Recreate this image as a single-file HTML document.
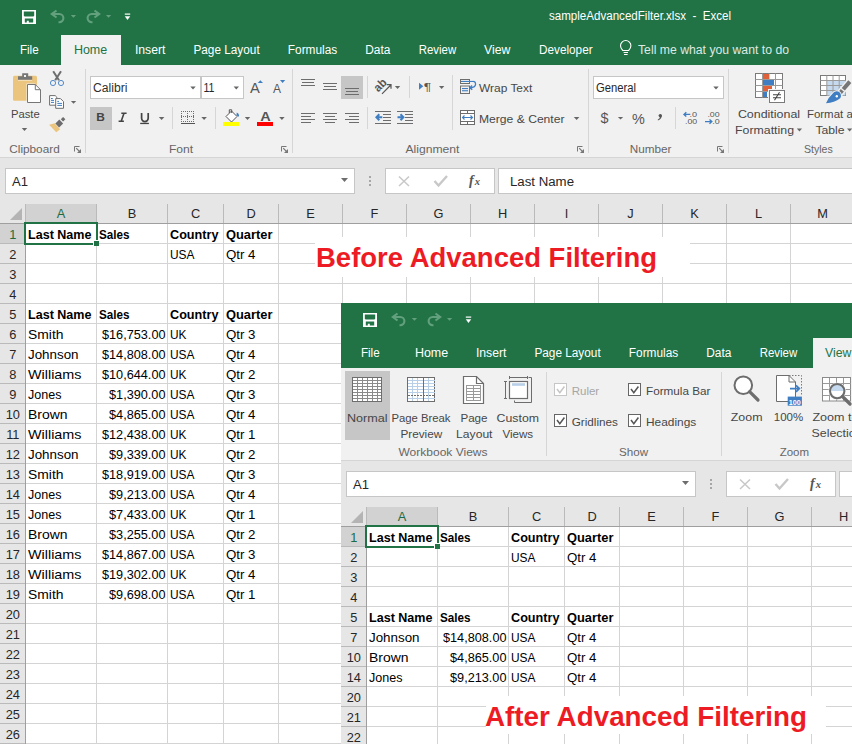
<!DOCTYPE html><html><head><meta charset="utf-8"><style>html,body{margin:0;padding:0;background:#fff;overflow:hidden}svg{display:block}text{font-family:"Liberation Sans",sans-serif;white-space:pre}</style></head><body>
<svg width="852" height="744" viewBox="0 0 852 744">
<g>
<rect x="0" y="0" width="900" height="65" fill="#217346" />
<rect x="61" y="35" width="60" height="30" fill="#f1f1f1" />
<text x="19.900000000000002" y="54" font-size="12.5" fill="#ffffff" textLength="18.8" lengthAdjust="spacingAndGlyphs" >File</text>
<text x="73.89999999999999" y="54" font-size="12.5" fill="#217346" textLength="33.3" lengthAdjust="spacingAndGlyphs" >Home</text>
<text x="134.9" y="54" font-size="12.5" fill="#ffffff" textLength="30.6" lengthAdjust="spacingAndGlyphs" >Insert</text>
<text x="193.4" y="54" font-size="12.5" fill="#ffffff" textLength="66.3" lengthAdjust="spacingAndGlyphs" >Page Layout</text>
<text x="287.8" y="54" font-size="12.5" fill="#ffffff" textLength="49.4" lengthAdjust="spacingAndGlyphs" >Formulas</text>
<text x="365.2" y="54" font-size="12.5" fill="#ffffff" textLength="25.2" lengthAdjust="spacingAndGlyphs" >Data</text>
<text x="418.7" y="54" font-size="12.5" fill="#ffffff" textLength="37.5" lengthAdjust="spacingAndGlyphs" >Review</text>
<text x="484.0" y="54" font-size="12.5" fill="#ffffff" textLength="26.4" lengthAdjust="spacingAndGlyphs" >View</text>
<text x="539.0999999999999" y="54" font-size="12.5" fill="#ffffff" textLength="53.5" lengthAdjust="spacingAndGlyphs" >Developer</text>
<rect x="0" y="65" width="900" height="92" fill="#f1f1f1" />
<rect x="0" y="157" width="900" height="1" fill="#d5d5d5" />
<rect x="0" y="158" width="900" height="46" fill="#e6e6e6" />
<text x="549" y="20" font-size="12.5" fill="#ffffff" textLength="182" lengthAdjust="spacingAndGlyphs" >sampleAdvancedFilter.xlsx  -  Excel</text>
<path fill="#fff" fill-rule="evenodd" d="M22 10h14v14H22z M23.8 11.6v4.2l0.8 0.8h8.8l0.8-0.8V11.6z M24.8 18.6v3.8h2v-1.6h2v1.6h4.4v-3.8z"/>
<path d="M56.5 10.5L51.8 14L56.5 17.5M52.5 14H59.3a4.1 4.1 0 0 1 0 8.2H58.5" stroke="#63a07d" stroke-width="2.1" fill="none"/>
<path d="M70.8 15h5.3l-2.65 2.8z" fill="#63a07d"/>
<path d="M94.5 10.5L99.2 14L94.5 17.5M98.5 14H91.7a4.1 4.1 0 0 0 0 8.2H92.5" stroke="#63a07d" stroke-width="2.1" fill="none"/>
<path d="M105.9 15h5.3l-2.65 2.8z" fill="#63a07d"/>
<rect x="124.8" y="13.5" width="5.4" height="1.2" fill="#fff" />
<path d="M124.8 16.2h5.4l-2.7 3.8z" fill="#fff"/>
<text x="621" y="55" font-size="1" fill="#000" ></text>
<path d="M623.6 52.5h4.4M624 54.5h3.6M622.8 50.5q-2.3-2.3-2.3-4.8a5.2 5.2 0 0 1 10.4 0q0 2.5-2.3 4.8z" stroke="#ffffff" stroke-width="1.1" fill="none"/>
<text x="638" y="54" font-size="12.5" fill="#dfe9e3" textLength="151" lengthAdjust="spacingAndGlyphs" >Tell me what you want to do</text>
<rect x="13" y="75.8" width="24" height="25" rx="1.5" fill="#ebc57e"/>
<rect x="18" y="79.5" width="14" height="1.5" fill="#f3deb5"/>
<path d="M18 76.2h4.2v-3h6v3h4v3.6H18z" fill="#767676"/>
<rect x="24" y="75" width="2" height="2" fill="#f1f1f1" />
<path d="M26.5 83.5h8.5l5.5 5.5v14H26.5z" fill="#f1f1f1"/>
<path d="M27.5 84.5h7.8l5.2 5.2v12.8h-13z" fill="#ffffff" stroke="#767676" stroke-width="1"/>
<path d="M35.3 84.5v5.2h5.2" fill="none" stroke="#767676" stroke-width="1"/>
<text x="10.9" y="118" font-size="11.6" fill="#474747" textLength="28.8" lengthAdjust="spacingAndGlyphs" >Paste</text>
<path d="M21.8 128h5.4l-2.7 3z" fill="#666666"/>
<path d="M53.2 71.3L59 80.2M61 71.3L55.2 80.2" stroke="#6d6d6d" stroke-width="2" fill="none"/>
<circle cx="53" cy="83" r="2.6" fill="none" stroke="#4a84c8" stroke-width="0.95"/>
<circle cx="61" cy="83" r="2.6" fill="none" stroke="#4a84c8" stroke-width="0.95"/>
<path d="M49.6 95.6h5.6l1.6 1.6v8H49.6z" fill="#fff" stroke="#6d6d6d" stroke-width="1"/>
<path d="M55.7 98.6h4.8l3 3v6.7h-7.8z" fill="#fff" stroke="#6d6d6d" stroke-width="1"/>
<rect x="51" y="98.0" width="1.7999999999999972" height="1" fill="#3f7ec3" />
<rect x="51" y="99.9" width="3" height="1" fill="#3f7ec3" />
<rect x="51" y="101.9" width="3" height="1" fill="#3f7ec3" />
<rect x="57.3" y="100.9" width="1.7000000000000028" height="1" fill="#3f7ec3" />
<rect x="57.3" y="102.9" width="4.700000000000003" height="1" fill="#3f7ec3" />
<rect x="57.3" y="104.9" width="4.700000000000003" height="1" fill="#3f7ec3" />
<path d="M70.9 101h5.3l-2.65 2.8z" fill="#666666"/>
<path d="M49.1 124.8L54.5 123.2L60.2 129.3L56.2 132.2z" fill="#ebc57e"/>
<path d="M55.3 123.6L59.3 119.6L63.1 123.4L59.1 127.4z" fill="#6d6d6d"/>
<path d="M60.8 119.2L63.1 116.9L65.4 119.2L63.1 121.5z" fill="#6d6d6d"/>
<text x="9.3" y="152.9" font-size="11" fill="#666666" textLength="50.4" lengthAdjust="spacingAndGlyphs" >Clipboard</text>
<path d="M74.5 151.5V146.5H79.5" fill="none" stroke="#777" stroke-width="1"/>
<path d="M76.2 148.2L79.5 151.5" fill="none" stroke="#777" stroke-width="1.1"/>
<path d="M81 149V153H77z" fill="#777"/>
<rect x="85" y="69" width="1" height="84" fill="#d6d6d6" />
<rect x="90.5" y="76.5" width="110" height="22" fill="#fff" stroke="#c6c6c6"/>
<text x="93" y="91.5" font-size="12.5" fill="#303030" textLength="34.5" lengthAdjust="spacingAndGlyphs" >Calibri</text>
<path d="M190.3 86.5h5.4l-2.7 3z" fill="#666666"/>
<rect x="201.5" y="76.5" width="42" height="22" fill="#fff" stroke="#c6c6c6"/>
<text x="203.5" y="91.5" font-size="12.5" fill="#262626" textLength="11" lengthAdjust="spacingAndGlyphs" >11</text>
<path d="M233.6 86.5h5.4l-2.7 3z" fill="#666666"/>
<text x="250" y="93.4" font-size="14.7" fill="#555" textLength="9.8" lengthAdjust="spacingAndGlyphs" >A</text>
<path d="M257.7 83h5.3l-2.65-2.8z" fill="#3f7ec3" transform="translate(0,0)"/>
<text x="272.9" y="93.4" font-size="12.3" fill="#555" textLength="8" lengthAdjust="spacingAndGlyphs" >A</text>
<path d="M280 80h5.2l-2.6 2.9z" fill="#3f7ec3"/>
<rect x="90" y="107" width="22" height="23" fill="#c6c6c6" />
<text x="96.2" y="121.4" font-size="11.5" fill="#444" font-weight="bold" textLength="8.6" lengthAdjust="spacingAndGlyphs" >B</text>
<path d="M121.3 113.2h5.3M118.6 121.2h5.3M124 113.2l-2.8 8" stroke="#444" stroke-width="1.6" fill="none"/>
<path d="M141.6 113v5.3a3.3 3.3 0 0 0 6.6 0V113" stroke="#444" stroke-width="1.7" fill="none"/>
<rect x="140.2" y="122.8" width="8.7" height="1.3" fill="#444" />
<path d="M158.8 117h5.6l-2.8 3z" fill="#666666"/>
<rect x="172" y="107" width="1" height="22" fill="#d6d6d6" />
<rect x="181" y="111" width="1" height="1" fill="#6d6d6d" />
<rect x="183" y="111" width="1" height="1" fill="#6d6d6d" />
<rect x="185" y="111" width="1" height="1" fill="#6d6d6d" />
<rect x="187" y="111" width="1" height="1" fill="#6d6d6d" />
<rect x="189" y="111" width="1" height="1" fill="#6d6d6d" />
<rect x="191" y="111" width="1" height="1" fill="#6d6d6d" />
<rect x="193" y="111" width="1" height="1" fill="#6d6d6d" />
<rect x="181" y="116" width="1" height="1" fill="#6d6d6d" />
<rect x="183" y="116" width="1" height="1" fill="#6d6d6d" />
<rect x="185" y="116" width="1" height="1" fill="#6d6d6d" />
<rect x="187" y="116" width="1" height="1" fill="#6d6d6d" />
<rect x="189" y="116" width="1" height="1" fill="#6d6d6d" />
<rect x="191" y="116" width="1" height="1" fill="#6d6d6d" />
<rect x="193" y="116" width="1" height="1" fill="#6d6d6d" />
<rect x="181" y="121" width="1" height="1" fill="#6d6d6d" />
<rect x="183" y="121" width="1" height="1" fill="#6d6d6d" />
<rect x="185" y="121" width="1" height="1" fill="#6d6d6d" />
<rect x="187" y="121" width="1" height="1" fill="#6d6d6d" />
<rect x="189" y="121" width="1" height="1" fill="#6d6d6d" />
<rect x="191" y="121" width="1" height="1" fill="#6d6d6d" />
<rect x="193" y="121" width="1" height="1" fill="#6d6d6d" />
<rect x="181" y="111" width="1" height="1" fill="#6d6d6d" />
<rect x="181" y="113" width="1" height="1" fill="#6d6d6d" />
<rect x="181" y="115" width="1" height="1" fill="#6d6d6d" />
<rect x="181" y="117" width="1" height="1" fill="#6d6d6d" />
<rect x="181" y="119" width="1" height="1" fill="#6d6d6d" />
<rect x="181" y="121" width="1" height="1" fill="#6d6d6d" />
<rect x="187" y="111" width="1" height="1" fill="#6d6d6d" />
<rect x="187" y="113" width="1" height="1" fill="#6d6d6d" />
<rect x="187" y="115" width="1" height="1" fill="#6d6d6d" />
<rect x="187" y="117" width="1" height="1" fill="#6d6d6d" />
<rect x="187" y="119" width="1" height="1" fill="#6d6d6d" />
<rect x="187" y="121" width="1" height="1" fill="#6d6d6d" />
<rect x="193" y="111" width="1" height="1" fill="#6d6d6d" />
<rect x="193" y="113" width="1" height="1" fill="#6d6d6d" />
<rect x="193" y="115" width="1" height="1" fill="#6d6d6d" />
<rect x="193" y="117" width="1" height="1" fill="#6d6d6d" />
<rect x="193" y="119" width="1" height="1" fill="#6d6d6d" />
<rect x="193" y="121" width="1" height="1" fill="#6d6d6d" />
<rect x="181" y="123" width="14" height="1" fill="#555" />
<path d="M201.3 117h5.6l-2.8 3z" fill="#666666"/>
<rect x="215" y="107" width="1" height="22" fill="#d6d6d6" />
<path d="M226 116.5L231.5 111L237 116.5L231.5 122z" fill="#fff" stroke="#555" stroke-width="1"/>
<path d="M229.3 113V109.8h2.4V113" fill="none" stroke="#555" stroke-width="1"/>
<path d="M236.8 112.5q2.5 1 2.2 4.2q-1.2-1-2.6-1.3z" fill="#3f7ec3"/>
<rect x="223" y="122" width="16" height="4" fill="#ffff00" />
<path d="M244.8 117h5.4l-2.7 3z" fill="#666666"/>
<text x="260.2" y="121.4" font-size="13.5" fill="#555" font-weight="bold" textLength="10.5" lengthAdjust="spacingAndGlyphs" >A</text>
<rect x="257" y="122" width="16" height="4" fill="#ff0000" />
<path d="M279.2 117h5.4l-2.7 3z" fill="#666666"/>
<text x="168.9" y="152.9" font-size="11" fill="#666666" textLength="24.2" lengthAdjust="spacingAndGlyphs" >Font</text>
<path d="M281.5 151.5V146.5H286.5" fill="none" stroke="#777" stroke-width="1"/>
<path d="M283.2 148.2L286.5 151.5" fill="none" stroke="#777" stroke-width="1.1"/>
<path d="M288 149V153H284z" fill="#777"/>
<rect x="292" y="69" width="1" height="84" fill="#d6d6d6" />
<rect x="341" y="76" width="22" height="23" fill="#c6c6c6" />
<rect x="301" y="79" width="14" height="1" fill="#6d6d6d" />
<rect x="302" y="82" width="12" height="1" fill="#6d6d6d" />
<rect x="301" y="85" width="14" height="1" fill="#6d6d6d" />
<rect x="323" y="83" width="14" height="1" fill="#6d6d6d" />
<rect x="324" y="86" width="12" height="1" fill="#6d6d6d" />
<rect x="323" y="89" width="14" height="1" fill="#6d6d6d" />
<rect x="345" y="88" width="14" height="1" fill="#6d6d6d" />
<rect x="346" y="91" width="12" height="1" fill="#6d6d6d" />
<rect x="345" y="94" width="14" height="1" fill="#6d6d6d" />
<rect x="301" y="113" width="14" height="1" fill="#6d6d6d" />
<rect x="301" y="116" width="10" height="1" fill="#6d6d6d" />
<rect x="301" y="119" width="14" height="1" fill="#6d6d6d" />
<rect x="301" y="122" width="10" height="1" fill="#6d6d6d" />
<rect x="323" y="113" width="14" height="1" fill="#6d6d6d" />
<rect x="325" y="116" width="10" height="1" fill="#6d6d6d" />
<rect x="323" y="119" width="14" height="1" fill="#6d6d6d" />
<rect x="325" y="122" width="10" height="1" fill="#6d6d6d" />
<rect x="345" y="113" width="14" height="1" fill="#6d6d6d" />
<rect x="349" y="116" width="10" height="1" fill="#6d6d6d" />
<rect x="345" y="119" width="14" height="1" fill="#6d6d6d" />
<rect x="349" y="122" width="10" height="1" fill="#6d6d6d" />
<rect x="367" y="76" width="1" height="22" fill="#d6d6d6" />
<rect x="367" y="107" width="1" height="22" fill="#d6d6d6" />
<g transform="translate(380.2,84.6) rotate(-45)"><text x="-6.8" y="4.2" font-size="12" fill="#555" font-weight="bold" textLength="13" lengthAdjust="spacingAndGlyphs">ab</text></g>
<path d="M382 93.8L390.8 85M386.8 84.6h4.2v4.2" stroke="#555" stroke-width="1.2" fill="none"/>
<path d="M394.9 86h5.3l-2.65 2.9z" fill="#666666"/>
<rect x="409" y="76" width="1" height="22" fill="#d6d6d6" />
<path d="M419 82.8v7l4.3-3.5z" fill="#3f7ec3"/>
<text x="423.8" y="90.8" font-size="11" fill="#555" textLength="7.5" lengthAdjust="spacingAndGlyphs" >¶</text>
<path d="M439 86h5.3l-2.65 2.9z" fill="#666666"/>
<rect x="375" y="111" width="16" height="1" fill="#6d6d6d" />
<rect x="383" y="114" width="8" height="1" fill="#6d6d6d" />
<rect x="383" y="117" width="8" height="1" fill="#6d6d6d" />
<rect x="383" y="120" width="8" height="1" fill="#6d6d6d" />
<rect x="375" y="123" width="16" height="1" fill="#6d6d6d" />
<rect x="397" y="111" width="16" height="1" fill="#6d6d6d" />
<rect x="405" y="114" width="8" height="1" fill="#6d6d6d" />
<rect x="405" y="117" width="8" height="1" fill="#6d6d6d" />
<rect x="405" y="120" width="8" height="1" fill="#6d6d6d" />
<rect x="397" y="123" width="16" height="1" fill="#6d6d6d" />
<path d="M376.5 117.2h5.8M379.3 114.2l-2.9 3 2.9 3" stroke="#3f7ec3" stroke-width="2" fill="none"/>
<path d="M397.5 117.2h5.8M400.5 114.2l2.9 3-2.9 3" stroke="#3f7ec3" stroke-width="2" fill="none"/>
<rect x="460.5" y="79.5" width="9" height="4" fill="none" stroke="#6d6d6d"/>
<rect x="460.5" y="86" width="9" height="7.5" fill="none" stroke="#6d6d6d"/>
<rect x="461" y="80.9" width="13" height="1.1" fill="#3f7ec3" />
<rect x="462" y="88" width="6" height="1.1" fill="#3f7ec3" />
<rect x="462" y="90.2" width="6" height="1.1" fill="#3f7ec3" />
<path d="M473.8 81.5q1.8 0.4 1.8 2.5q0 3.5-5.5 3.8M472 85.5l-2.2 2.3 2.5 1.8" stroke="#3f7ec3" stroke-width="1.3" fill="none"/>
<text x="479.0" y="91.7" font-size="11.6" fill="#474747" textLength="53.3" lengthAdjust="spacingAndGlyphs" >Wrap Text</text>
<rect x="460.5" y="110.5" width="14" height="14" fill="#fff" stroke="#6d6d6d"/>
<path d="M461 113.5h13M461 121.5h13M467.5 111v2.5M467.5 122v2.5" stroke="#6d6d6d" stroke-width="1" fill="none"/>
<path d="M462.5 117.5h10M464.5 115.5l-2 2 2 2M470.5 115.5l2 2-2 2" stroke="#3f7ec3" stroke-width="1.1" fill="none"/>
<text x="479.0" y="123.2" font-size="11.6" fill="#474747" textLength="85.5" lengthAdjust="spacingAndGlyphs" >Merge &amp; Center</text>
<path d="M573.8 117h5.6l-2.8 3z" fill="#666666"/>
<text x="405.5" y="152.9" font-size="11" fill="#666666" textLength="54" lengthAdjust="spacingAndGlyphs" >Alignment</text>
<path d="M577.5 151.5V146.5H582.5" fill="none" stroke="#777" stroke-width="1"/>
<path d="M579.2 148.2L582.5 151.5" fill="none" stroke="#777" stroke-width="1.1"/>
<path d="M584 149V153H580z" fill="#777"/>
<rect x="452" y="75" width="1" height="55" fill="#d6d6d6" />
<rect x="588" y="69" width="1" height="84" fill="#d6d6d6" />
<rect x="593.5" y="76.5" width="130" height="22" fill="#fff" stroke="#c6c6c6"/>
<text x="596" y="91.5" font-size="12.5" fill="#262626" textLength="40" lengthAdjust="spacingAndGlyphs" >General</text>
<path d="M713.3 86.5h5.4l-2.7 3z" fill="#666666"/>
<text x="600.5" y="123" font-size="14.5" fill="#555" textLength="8" lengthAdjust="spacingAndGlyphs" >$</text>
<path d="M617.9 117h5.3l-2.65 2.5z" fill="#666666"/>
<text x="632" y="123.8" font-size="14" fill="#555" textLength="12.8" lengthAdjust="spacingAndGlyphs" >%</text>
<circle cx="660.3" cy="115.6" r="1.7" fill="#555"/>
<path d="M661.6 115.8q0.6 2.8-3.6 4.6l-0.3-0.6q2.5-1.4 2.3-3.6z" fill="#555"/>
<rect x="675" y="107" width="1" height="22" fill="#d6d6d6" />
<text x="689.6" y="117" font-size="8" fill="#555" textLength="7.6" lengthAdjust="spacingAndGlyphs" >.0</text>
<text x="685" y="123.8" font-size="8" fill="#555" textLength="12.2" lengthAdjust="spacingAndGlyphs" >.00</text>
<path d="M683.8 114.4h6.5M686.3 112.2l-2.3 2.2 2.3 2.2" stroke="#3f7ec3" stroke-width="1.4" fill="none"/>
<text x="707.4" y="117" font-size="8" fill="#555" textLength="12.2" lengthAdjust="spacingAndGlyphs" >.00</text>
<text x="712.2" y="123.8" font-size="8" fill="#555" textLength="7.4" lengthAdjust="spacingAndGlyphs" >.0</text>
<path d="M705 121.6h6.8M709.5 119.4l2.3 2.2-2.3 2.2" stroke="#3f7ec3" stroke-width="1.4" fill="none"/>
<text x="629.8" y="152.9" font-size="11" fill="#666666" textLength="41.7" lengthAdjust="spacingAndGlyphs" >Number</text>
<path d="M717.5 151.5V146.5H722.5" fill="none" stroke="#777" stroke-width="1"/>
<path d="M719.2 148.2L722.5 151.5" fill="none" stroke="#777" stroke-width="1.1"/>
<path d="M724 149V153H720z" fill="#777"/>
<rect x="728" y="69" width="1" height="84" fill="#d6d6d6" />
<rect x="755.5" y="73.5" width="27" height="24" fill="#fff" stroke="#7a7a7a"/>
<path d="M762.5 73.5v24M769 73.5v24M775.5 73.5v24M755.5 79.5h27M755.5 85.5h27M755.5 91.5h27" stroke="#9a9a9a" stroke-width="1" fill="none"/>
<rect x="763" y="74" width="6" height="5" fill="#e0603a" />
<rect x="763" y="80" width="11" height="5" fill="#3f7ec3" />
<rect x="763" y="86" width="9" height="5" fill="#e0603a" />
<rect x="763" y="92" width="4" height="5" fill="#3f7ec3" />
<rect x="768" y="89" width="18" height="14.5" fill="#f1f1f1"/>
<rect x="769.5" y="90.5" width="15" height="12" fill="#fff" stroke="#7a7a7a"/>
<path d="M773 94.8h8M773 97.8h8M779.5 92.3l-5 8" stroke="#444" stroke-width="1.1" fill="none"/>
<text x="737.9" y="117.7" font-size="11.6" fill="#474747" textLength="62.2" lengthAdjust="spacingAndGlyphs" >Conditional</text>
<text x="735.1" y="134" font-size="11.6" fill="#474747" textLength="58.9" lengthAdjust="spacingAndGlyphs" >Formatting</text>
<path d="M796.8 128.5h5.3l-2.65 2.9z" fill="#666666"/>
<rect x="820.5" y="75.5" width="25" height="20" fill="#fff" stroke="#7a7a7a"/>
<rect x="827" y="80.5" width="18.5" height="15" fill="#c5d9ef" />
<path d="M826.8 75.5v20M833 75.5v20M839.2 75.5v20M820.5 80.5h25M820.5 85.5h25M820.5 90.5h25" stroke="#9a9a9a" stroke-width="1" fill="none"/>
<path d="M837.5 96L850 81.5" stroke="#f1f1f1" stroke-width="7" fill="none"/>
<path d="M838.6 94.8L849.8 81.6" stroke="#767676" stroke-width="4" fill="none"/>
<path d="M842.4 90.4L843.3 89.3" stroke="#f1f1f1" stroke-width="5" fill="none"/>
<path d="M826 103.3Q828.5 97 833 93.2A4.2 4.2 0 0 1 840.2 98.2Q834.5 102.5 826 103.3z" fill="#f1f1f1" stroke="#f1f1f1" stroke-width="2"/>
<path d="M826 103.3Q828.5 97 833 93.2A4.2 4.2 0 0 1 840.2 98.2Q834.5 102.5 826 103.3z" fill="#3f7ec3"/>
<circle cx="836.8" cy="96.2" r="1.2" fill="#ffffff"/>
<text x="806.9" y="117.7" font-size="11.6" fill="#474747" textLength="51.6" lengthAdjust="spacingAndGlyphs" >Format as</text>
<text x="815.4" y="134" font-size="11.6" fill="#474747" textLength="29.1" lengthAdjust="spacingAndGlyphs" >Table</text>
<path d="M847 128.5h5.3l-2.65 2.9z" fill="#666666"/>
<text x="803.9" y="152.9" font-size="11" fill="#666666" textLength="28.8" lengthAdjust="spacingAndGlyphs" >Styles</text>
<rect x="5.5" y="168.5" width="349" height="25" fill="#ffffff" stroke="#c6c6c6" stroke-width="1"/>
<text x="12" y="186" font-size="12.5" fill="#262626" textLength="16" lengthAdjust="spacingAndGlyphs" >A1</text>
<path d="M341 178h7l-3.5 4z" fill="#6d6d6d"/>
<rect x="369" y="176" width="2" height="2" fill="#a6a6a6" />
<rect x="369" y="180" width="2" height="2" fill="#a6a6a6" />
<rect x="369" y="184" width="2" height="2" fill="#a6a6a6" />
<rect x="385.5" y="168.5" width="109" height="25" fill="#ffffff" stroke="#c6c6c6" stroke-width="1"/>
<path d="M399 176.5l10 9.5M409 176.5l-10 9.5" stroke="#c8c8c8" stroke-width="1.5" fill="none"/>
<path d="M434.5 181l4 4.5 8.5-9.5" stroke="#c8c8c8" stroke-width="2.4" fill="none"/>
<text x="469" y="185" font-size="14" fill="#555" style="font-family:'Liberation Serif';font-style:italic;font-weight:bold">f</text>
<text x="474.8" y="185" font-size="10.5" fill="#555" style="font-family:'Liberation Serif';font-style:italic;font-weight:bold">x</text>
<rect x="498.5" y="168.5" width="500" height="25" fill="#ffffff" stroke="#c6c6c6" stroke-width="1"/>
<text x="510" y="186" font-size="12.5" fill="#262626" textLength="64" lengthAdjust="spacingAndGlyphs" >Last Name</text>
<rect x="26" y="224" width="900" height="520" fill="#ffffff" />
<rect x="26" y="243" width="874" height="1" fill="#d4d4d4" />
<rect x="26" y="263" width="874" height="1" fill="#d4d4d4" />
<rect x="26" y="283" width="874" height="1" fill="#d4d4d4" />
<rect x="26" y="303" width="874" height="1" fill="#d4d4d4" />
<rect x="26" y="323" width="874" height="1" fill="#d4d4d4" />
<rect x="26" y="343" width="874" height="1" fill="#d4d4d4" />
<rect x="26" y="363" width="874" height="1" fill="#d4d4d4" />
<rect x="26" y="383" width="874" height="1" fill="#d4d4d4" />
<rect x="26" y="403" width="874" height="1" fill="#d4d4d4" />
<rect x="26" y="423" width="874" height="1" fill="#d4d4d4" />
<rect x="26" y="443" width="874" height="1" fill="#d4d4d4" />
<rect x="26" y="463" width="874" height="1" fill="#d4d4d4" />
<rect x="26" y="483" width="874" height="1" fill="#d4d4d4" />
<rect x="26" y="503" width="874" height="1" fill="#d4d4d4" />
<rect x="26" y="523" width="874" height="1" fill="#d4d4d4" />
<rect x="26" y="543" width="874" height="1" fill="#d4d4d4" />
<rect x="26" y="563" width="874" height="1" fill="#d4d4d4" />
<rect x="26" y="583" width="874" height="1" fill="#d4d4d4" />
<rect x="26" y="603" width="874" height="1" fill="#d4d4d4" />
<rect x="26" y="623" width="874" height="1" fill="#d4d4d4" />
<rect x="26" y="643" width="874" height="1" fill="#d4d4d4" />
<rect x="26" y="663" width="874" height="1" fill="#d4d4d4" />
<rect x="26" y="683" width="874" height="1" fill="#d4d4d4" />
<rect x="26" y="703" width="874" height="1" fill="#d4d4d4" />
<rect x="26" y="723" width="874" height="1" fill="#d4d4d4" />
<rect x="26" y="743" width="874" height="1" fill="#d4d4d4" />
<rect x="96" y="224" width="1" height="520" fill="#d4d4d4" />
<rect x="167" y="224" width="1" height="520" fill="#d4d4d4" />
<rect x="223" y="224" width="1" height="520" fill="#d4d4d4" />
<rect x="278" y="224" width="1" height="520" fill="#d4d4d4" />
<rect x="342" y="224" width="1" height="520" fill="#d4d4d4" />
<rect x="406" y="224" width="1" height="520" fill="#d4d4d4" />
<rect x="470" y="224" width="1" height="520" fill="#d4d4d4" />
<rect x="534" y="224" width="1" height="520" fill="#d4d4d4" />
<rect x="598" y="224" width="1" height="520" fill="#d4d4d4" />
<rect x="662" y="224" width="1" height="520" fill="#d4d4d4" />
<rect x="726" y="224" width="1" height="520" fill="#d4d4d4" />
<rect x="790" y="224" width="1" height="520" fill="#d4d4d4" />
<rect x="854" y="224" width="1" height="520" fill="#d4d4d4" />
<rect x="918" y="224" width="1" height="520" fill="#d4d4d4" />
<rect x="0" y="204" width="900" height="19" fill="#e6e6e6" />
<rect x="26" y="204" width="70" height="19" fill="#d2d2d2" />
<rect x="96" y="204" width="1" height="19" fill="#bababa" />
<rect x="167" y="204" width="1" height="19" fill="#bababa" />
<rect x="223" y="204" width="1" height="19" fill="#bababa" />
<rect x="278" y="204" width="1" height="19" fill="#bababa" />
<rect x="342" y="204" width="1" height="19" fill="#bababa" />
<rect x="406" y="204" width="1" height="19" fill="#bababa" />
<rect x="470" y="204" width="1" height="19" fill="#bababa" />
<rect x="534" y="204" width="1" height="19" fill="#bababa" />
<rect x="598" y="204" width="1" height="19" fill="#bababa" />
<rect x="662" y="204" width="1" height="19" fill="#bababa" />
<rect x="726" y="204" width="1" height="19" fill="#bababa" />
<rect x="790" y="204" width="1" height="19" fill="#bababa" />
<rect x="854" y="204" width="1" height="19" fill="#bababa" />
<rect x="918" y="204" width="1" height="19" fill="#bababa" />
<rect x="0" y="223" width="900" height="1" fill="#9f9f9f" />
<rect x="25" y="204" width="1" height="19" fill="#bababa" />
<path d="M22 208V220H10z" fill="#b4b4b4"/>
<text x="61.0" y="218" font-size="12.8" fill="#1e6b41" text-anchor="middle" >A</text>
<text x="132.0" y="218" font-size="12.8" fill="#262626" text-anchor="middle" >B</text>
<text x="195.5" y="218" font-size="12.8" fill="#262626" text-anchor="middle" >C</text>
<text x="251.0" y="218" font-size="12.8" fill="#262626" text-anchor="middle" >D</text>
<text x="310.5" y="218" font-size="12.8" fill="#262626" text-anchor="middle" >E</text>
<text x="374.5" y="218" font-size="12.8" fill="#262626" text-anchor="middle" >F</text>
<text x="438.5" y="218" font-size="12.8" fill="#262626" text-anchor="middle" >G</text>
<text x="502.5" y="218" font-size="12.8" fill="#262626" text-anchor="middle" >H</text>
<text x="566.5" y="218" font-size="12.8" fill="#262626" text-anchor="middle" >I</text>
<text x="630.5" y="218" font-size="12.8" fill="#262626" text-anchor="middle" >J</text>
<text x="694.5" y="218" font-size="12.8" fill="#262626" text-anchor="middle" >K</text>
<text x="758.5" y="218" font-size="12.8" fill="#262626" text-anchor="middle" >L</text>
<text x="822.5" y="218" font-size="12.8" fill="#262626" text-anchor="middle" >M</text>
<text x="886.5" y="218" font-size="12.8" fill="#262626" text-anchor="middle" >N</text>
<rect x="0" y="224" width="25" height="520" fill="#e6e6e6" />
<rect x="0" y="224" width="25" height="19" fill="#d2d2d2" />
<rect x="0" y="243" width="25" height="1" fill="#bababa" />
<text x="12.8" y="239" font-size="12.8" fill="#1e6b41" text-anchor="middle" >1</text>
<rect x="0" y="263" width="25" height="1" fill="#bababa" />
<text x="12.8" y="259" font-size="12.8" fill="#262626" text-anchor="middle" >2</text>
<rect x="0" y="283" width="25" height="1" fill="#bababa" />
<text x="12.8" y="279" font-size="12.8" fill="#262626" text-anchor="middle" >3</text>
<rect x="0" y="303" width="25" height="1" fill="#bababa" />
<text x="12.8" y="299" font-size="12.8" fill="#262626" text-anchor="middle" >4</text>
<rect x="0" y="323" width="25" height="1" fill="#bababa" />
<text x="12.8" y="319" font-size="12.8" fill="#262626" text-anchor="middle" >5</text>
<rect x="0" y="343" width="25" height="1" fill="#bababa" />
<text x="12.8" y="339" font-size="12.8" fill="#262626" text-anchor="middle" >6</text>
<rect x="0" y="363" width="25" height="1" fill="#bababa" />
<text x="12.8" y="359" font-size="12.8" fill="#262626" text-anchor="middle" >7</text>
<rect x="0" y="383" width="25" height="1" fill="#bababa" />
<text x="12.8" y="379" font-size="12.8" fill="#262626" text-anchor="middle" >8</text>
<rect x="0" y="403" width="25" height="1" fill="#bababa" />
<text x="12.8" y="399" font-size="12.8" fill="#262626" text-anchor="middle" >9</text>
<rect x="0" y="423" width="25" height="1" fill="#bababa" />
<text x="12.8" y="419" font-size="12.8" fill="#262626" text-anchor="middle" >10</text>
<rect x="0" y="443" width="25" height="1" fill="#bababa" />
<text x="12.8" y="439" font-size="12.8" fill="#262626" text-anchor="middle" >11</text>
<rect x="0" y="463" width="25" height="1" fill="#bababa" />
<text x="12.8" y="459" font-size="12.8" fill="#262626" text-anchor="middle" >12</text>
<rect x="0" y="483" width="25" height="1" fill="#bababa" />
<text x="12.8" y="479" font-size="12.8" fill="#262626" text-anchor="middle" >13</text>
<rect x="0" y="503" width="25" height="1" fill="#bababa" />
<text x="12.8" y="499" font-size="12.8" fill="#262626" text-anchor="middle" >14</text>
<rect x="0" y="523" width="25" height="1" fill="#bababa" />
<text x="12.8" y="519" font-size="12.8" fill="#262626" text-anchor="middle" >15</text>
<rect x="0" y="543" width="25" height="1" fill="#bababa" />
<text x="12.8" y="539" font-size="12.8" fill="#262626" text-anchor="middle" >16</text>
<rect x="0" y="563" width="25" height="1" fill="#bababa" />
<text x="12.8" y="559" font-size="12.8" fill="#262626" text-anchor="middle" >17</text>
<rect x="0" y="583" width="25" height="1" fill="#bababa" />
<text x="12.8" y="579" font-size="12.8" fill="#262626" text-anchor="middle" >18</text>
<rect x="0" y="603" width="25" height="1" fill="#bababa" />
<text x="12.8" y="599" font-size="12.8" fill="#262626" text-anchor="middle" >19</text>
<rect x="0" y="623" width="25" height="1" fill="#bababa" />
<text x="12.8" y="619" font-size="12.8" fill="#262626" text-anchor="middle" >20</text>
<rect x="0" y="643" width="25" height="1" fill="#bababa" />
<text x="12.8" y="639" font-size="12.8" fill="#262626" text-anchor="middle" >21</text>
<rect x="0" y="663" width="25" height="1" fill="#bababa" />
<text x="12.8" y="659" font-size="12.8" fill="#262626" text-anchor="middle" >22</text>
<rect x="0" y="683" width="25" height="1" fill="#bababa" />
<text x="12.8" y="679" font-size="12.8" fill="#262626" text-anchor="middle" >23</text>
<rect x="0" y="703" width="25" height="1" fill="#bababa" />
<text x="12.8" y="699" font-size="12.8" fill="#262626" text-anchor="middle" >24</text>
<rect x="0" y="723" width="25" height="1" fill="#bababa" />
<text x="12.8" y="719" font-size="12.8" fill="#262626" text-anchor="middle" >25</text>
<rect x="0" y="743" width="25" height="1" fill="#bababa" />
<text x="12.8" y="739" font-size="12.8" fill="#262626" text-anchor="middle" >26</text>
<rect x="25" y="224" width="1" height="520" fill="#9f9f9f" />
<text x="28" y="239" font-size="13.2" fill="#000" font-weight="bold" textLength="63.5" lengthAdjust="spacingAndGlyphs" >Last Name</text>
<text x="99" y="239" font-size="13.2" fill="#000" font-weight="bold" textLength="30.5" lengthAdjust="spacingAndGlyphs" >Sales</text>
<text x="170" y="239" font-size="13.2" fill="#000" font-weight="bold" textLength="48.5" lengthAdjust="spacingAndGlyphs" >Country</text>
<text x="226" y="239" font-size="13.2" fill="#000" font-weight="bold" textLength="46.5" lengthAdjust="spacingAndGlyphs" >Quarter</text>
<text x="170" y="259" font-size="13.2" fill="#000" textLength="24.5" lengthAdjust="spacingAndGlyphs" >USA</text>
<text x="226" y="259" font-size="13.2" fill="#000" textLength="29.5" lengthAdjust="spacingAndGlyphs" >Qtr 4</text>
<text x="28" y="319" font-size="13.2" fill="#000" font-weight="bold" textLength="63.5" lengthAdjust="spacingAndGlyphs" >Last Name</text>
<text x="99" y="319" font-size="13.2" fill="#000" font-weight="bold" textLength="30.5" lengthAdjust="spacingAndGlyphs" >Sales</text>
<text x="170" y="319" font-size="13.2" fill="#000" font-weight="bold" textLength="48.5" lengthAdjust="spacingAndGlyphs" >Country</text>
<text x="226" y="319" font-size="13.2" fill="#000" font-weight="bold" textLength="46.5" lengthAdjust="spacingAndGlyphs" >Quarter</text>
<text x="28" y="339" font-size="13.2" fill="#000" textLength="35.5" lengthAdjust="spacingAndGlyphs" >Smith</text>
<text x="102" y="339" font-size="13.2" fill="#000" textLength="63.5" lengthAdjust="spacingAndGlyphs" >$16,753.00</text>
<text x="170" y="339" font-size="13.2" fill="#000" textLength="16.5" lengthAdjust="spacingAndGlyphs" >UK</text>
<text x="226" y="339" font-size="13.2" fill="#000" textLength="29.5" lengthAdjust="spacingAndGlyphs" >Qtr 3</text>
<text x="28" y="359" font-size="13.2" fill="#000" textLength="50.5" lengthAdjust="spacingAndGlyphs" >Johnson</text>
<text x="102" y="359" font-size="13.2" fill="#000" textLength="63.5" lengthAdjust="spacingAndGlyphs" >$14,808.00</text>
<text x="170" y="359" font-size="13.2" fill="#000" textLength="24.5" lengthAdjust="spacingAndGlyphs" >USA</text>
<text x="226" y="359" font-size="13.2" fill="#000" textLength="29.5" lengthAdjust="spacingAndGlyphs" >Qtr 4</text>
<text x="28" y="379" font-size="13.2" fill="#000" textLength="53.5" lengthAdjust="spacingAndGlyphs" >Williams</text>
<text x="102" y="379" font-size="13.2" fill="#000" textLength="63.5" lengthAdjust="spacingAndGlyphs" >$10,644.00</text>
<text x="170" y="379" font-size="13.2" fill="#000" textLength="16.5" lengthAdjust="spacingAndGlyphs" >UK</text>
<text x="226" y="379" font-size="13.2" fill="#000" textLength="29.5" lengthAdjust="spacingAndGlyphs" >Qtr 2</text>
<text x="28" y="399" font-size="13.2" fill="#000" textLength="33.5" lengthAdjust="spacingAndGlyphs" >Jones</text>
<text x="109" y="399" font-size="13.2" fill="#000" textLength="56.5" lengthAdjust="spacingAndGlyphs" >$1,390.00</text>
<text x="170" y="399" font-size="13.2" fill="#000" textLength="24.5" lengthAdjust="spacingAndGlyphs" >USA</text>
<text x="226" y="399" font-size="13.2" fill="#000" textLength="29.5" lengthAdjust="spacingAndGlyphs" >Qtr 3</text>
<text x="28" y="419" font-size="13.2" fill="#000" textLength="39.5" lengthAdjust="spacingAndGlyphs" >Brown</text>
<text x="109" y="419" font-size="13.2" fill="#000" textLength="56.5" lengthAdjust="spacingAndGlyphs" >$4,865.00</text>
<text x="170" y="419" font-size="13.2" fill="#000" textLength="24.5" lengthAdjust="spacingAndGlyphs" >USA</text>
<text x="226" y="419" font-size="13.2" fill="#000" textLength="29.5" lengthAdjust="spacingAndGlyphs" >Qtr 4</text>
<text x="28" y="439" font-size="13.2" fill="#000" textLength="53.5" lengthAdjust="spacingAndGlyphs" >Williams</text>
<text x="102" y="439" font-size="13.2" fill="#000" textLength="63.5" lengthAdjust="spacingAndGlyphs" >$12,438.00</text>
<text x="170" y="439" font-size="13.2" fill="#000" textLength="16.5" lengthAdjust="spacingAndGlyphs" >UK</text>
<text x="226" y="439" font-size="13.2" fill="#000" textLength="29.5" lengthAdjust="spacingAndGlyphs" >Qtr 1</text>
<text x="28" y="459" font-size="13.2" fill="#000" textLength="50.5" lengthAdjust="spacingAndGlyphs" >Johnson</text>
<text x="109" y="459" font-size="13.2" fill="#000" textLength="56.5" lengthAdjust="spacingAndGlyphs" >$9,339.00</text>
<text x="170" y="459" font-size="13.2" fill="#000" textLength="16.5" lengthAdjust="spacingAndGlyphs" >UK</text>
<text x="226" y="459" font-size="13.2" fill="#000" textLength="29.5" lengthAdjust="spacingAndGlyphs" >Qtr 2</text>
<text x="28" y="479" font-size="13.2" fill="#000" textLength="35.5" lengthAdjust="spacingAndGlyphs" >Smith</text>
<text x="102" y="479" font-size="13.2" fill="#000" textLength="63.5" lengthAdjust="spacingAndGlyphs" >$18,919.00</text>
<text x="170" y="479" font-size="13.2" fill="#000" textLength="24.5" lengthAdjust="spacingAndGlyphs" >USA</text>
<text x="226" y="479" font-size="13.2" fill="#000" textLength="29.5" lengthAdjust="spacingAndGlyphs" >Qtr 3</text>
<text x="28" y="499" font-size="13.2" fill="#000" textLength="33.5" lengthAdjust="spacingAndGlyphs" >Jones</text>
<text x="109" y="499" font-size="13.2" fill="#000" textLength="56.5" lengthAdjust="spacingAndGlyphs" >$9,213.00</text>
<text x="170" y="499" font-size="13.2" fill="#000" textLength="24.5" lengthAdjust="spacingAndGlyphs" >USA</text>
<text x="226" y="499" font-size="13.2" fill="#000" textLength="29.5" lengthAdjust="spacingAndGlyphs" >Qtr 4</text>
<text x="28" y="519" font-size="13.2" fill="#000" textLength="33.5" lengthAdjust="spacingAndGlyphs" >Jones</text>
<text x="109" y="519" font-size="13.2" fill="#000" textLength="56.5" lengthAdjust="spacingAndGlyphs" >$7,433.00</text>
<text x="170" y="519" font-size="13.2" fill="#000" textLength="16.5" lengthAdjust="spacingAndGlyphs" >UK</text>
<text x="226" y="519" font-size="13.2" fill="#000" textLength="29.5" lengthAdjust="spacingAndGlyphs" >Qtr 1</text>
<text x="28" y="539" font-size="13.2" fill="#000" textLength="39.5" lengthAdjust="spacingAndGlyphs" >Brown</text>
<text x="109" y="539" font-size="13.2" fill="#000" textLength="56.5" lengthAdjust="spacingAndGlyphs" >$3,255.00</text>
<text x="170" y="539" font-size="13.2" fill="#000" textLength="24.5" lengthAdjust="spacingAndGlyphs" >USA</text>
<text x="226" y="539" font-size="13.2" fill="#000" textLength="29.5" lengthAdjust="spacingAndGlyphs" >Qtr 2</text>
<text x="28" y="559" font-size="13.2" fill="#000" textLength="53.5" lengthAdjust="spacingAndGlyphs" >Williams</text>
<text x="102" y="559" font-size="13.2" fill="#000" textLength="63.5" lengthAdjust="spacingAndGlyphs" >$14,867.00</text>
<text x="170" y="559" font-size="13.2" fill="#000" textLength="24.5" lengthAdjust="spacingAndGlyphs" >USA</text>
<text x="226" y="559" font-size="13.2" fill="#000" textLength="29.5" lengthAdjust="spacingAndGlyphs" >Qtr 3</text>
<text x="28" y="579" font-size="13.2" fill="#000" textLength="53.5" lengthAdjust="spacingAndGlyphs" >Williams</text>
<text x="102" y="579" font-size="13.2" fill="#000" textLength="63.5" lengthAdjust="spacingAndGlyphs" >$19,302.00</text>
<text x="170" y="579" font-size="13.2" fill="#000" textLength="16.5" lengthAdjust="spacingAndGlyphs" >UK</text>
<text x="226" y="579" font-size="13.2" fill="#000" textLength="29.5" lengthAdjust="spacingAndGlyphs" >Qtr 4</text>
<text x="28" y="599" font-size="13.2" fill="#000" textLength="35.5" lengthAdjust="spacingAndGlyphs" >Smith</text>
<text x="109" y="599" font-size="13.2" fill="#000" textLength="56.5" lengthAdjust="spacingAndGlyphs" >$9,698.00</text>
<text x="170" y="599" font-size="13.2" fill="#000" textLength="24.5" lengthAdjust="spacingAndGlyphs" >USA</text>
<text x="226" y="599" font-size="13.2" fill="#000" textLength="29.5" lengthAdjust="spacingAndGlyphs" >Qtr 1</text>
<path d="M24 222H98V241M93 244H24V222" fill="none" stroke="#217346" stroke-width="0"/>
<rect x="24" y="222" width="74" height="2" fill="#217346" />
<rect x="24" y="222" width="2" height="23" fill="#217346" />
<rect x="96" y="222" width="2" height="18" fill="#217346" />
<rect x="24" y="243" width="69" height="2" fill="#217346" />
<rect x="93" y="240" width="6" height="6" fill="#ffffff" />
<rect x="94" y="241" width="5" height="5" fill="#217346" />
</g>
<rect x="315" y="237" width="375" height="40" fill="#ffffff" />
<text x="316" y="267" font-size="28.5" fill="#ed1c24" font-weight="bold" textLength="341" lengthAdjust="spacingAndGlyphs" >Before Advanced Filtering</text>
<g transform="translate(341,303)">
<rect x="0" y="0" width="900" height="65" fill="#217346" />
<rect x="472" y="35" width="52" height="30" fill="#f1f1f1" />
<text x="19.900000000000002" y="54" font-size="12.5" fill="#ffffff" textLength="18.8" lengthAdjust="spacingAndGlyphs" >File</text>
<text x="73.89999999999999" y="54" font-size="12.5" fill="#ffffff" textLength="33.3" lengthAdjust="spacingAndGlyphs" >Home</text>
<text x="134.9" y="54" font-size="12.5" fill="#ffffff" textLength="30.6" lengthAdjust="spacingAndGlyphs" >Insert</text>
<text x="193.4" y="54" font-size="12.5" fill="#ffffff" textLength="66.3" lengthAdjust="spacingAndGlyphs" >Page Layout</text>
<text x="287.8" y="54" font-size="12.5" fill="#ffffff" textLength="49.4" lengthAdjust="spacingAndGlyphs" >Formulas</text>
<text x="365.2" y="54" font-size="12.5" fill="#ffffff" textLength="25.2" lengthAdjust="spacingAndGlyphs" >Data</text>
<text x="418.7" y="54" font-size="12.5" fill="#ffffff" textLength="37.5" lengthAdjust="spacingAndGlyphs" >Review</text>
<text x="484.0" y="54" font-size="12.5" fill="#217346" textLength="26.4" lengthAdjust="spacingAndGlyphs" >View</text>
<text x="539.0999999999999" y="54" font-size="12.5" fill="#ffffff" textLength="53.5" lengthAdjust="spacingAndGlyphs" >Developer</text>
<rect x="0" y="65" width="900" height="92" fill="#f1f1f1" />
<rect x="0" y="157" width="900" height="1" fill="#d5d5d5" />
<rect x="0" y="158" width="900" height="46" fill="#e6e6e6" />
<path fill="#fff" fill-rule="evenodd" d="M22 10h14v14H22z M23.8 11.6v4.2l0.8 0.8h8.8l0.8-0.8V11.6z M24.8 18.6v3.8h2v-1.6h2v1.6h4.4v-3.8z"/>
<path d="M56.5 10.5L51.8 14L56.5 17.5M52.5 14H59.3a4.1 4.1 0 0 1 0 8.2H58.5" stroke="#63a07d" stroke-width="2.1" fill="none"/>
<path d="M70.8 15h5.3l-2.65 2.8z" fill="#63a07d"/>
<path d="M94.5 10.5L99.2 14L94.5 17.5M98.5 14H91.7a4.1 4.1 0 0 0 0 8.2H92.5" stroke="#63a07d" stroke-width="2.1" fill="none"/>
<path d="M105.9 15h5.3l-2.65 2.8z" fill="#63a07d"/>
<rect x="124.8" y="13.5" width="5.4" height="1.2" fill="#fff" />
<path d="M124.8 16.2h5.4l-2.7 3.8z" fill="#fff"/>
<rect x="5.5" y="168.5" width="349" height="25" fill="#ffffff" stroke="#c6c6c6" stroke-width="1"/>
<text x="12" y="186" font-size="12.5" fill="#262626" textLength="16" lengthAdjust="spacingAndGlyphs" >A1</text>
<path d="M341 178h7l-3.5 4z" fill="#6d6d6d"/>
<rect x="369" y="176" width="2" height="2" fill="#a6a6a6" />
<rect x="369" y="180" width="2" height="2" fill="#a6a6a6" />
<rect x="369" y="184" width="2" height="2" fill="#a6a6a6" />
<rect x="385.5" y="168.5" width="109" height="25" fill="#ffffff" stroke="#c6c6c6" stroke-width="1"/>
<path d="M399 176.5l10 9.5M409 176.5l-10 9.5" stroke="#c8c8c8" stroke-width="1.5" fill="none"/>
<path d="M434.5 181l4 4.5 8.5-9.5" stroke="#c8c8c8" stroke-width="2.4" fill="none"/>
<text x="469" y="185" font-size="14" fill="#555" style="font-family:'Liberation Serif';font-style:italic;font-weight:bold">f</text>
<text x="474.8" y="185" font-size="10.5" fill="#555" style="font-family:'Liberation Serif';font-style:italic;font-weight:bold">x</text>
<rect x="498.5" y="168.5" width="500" height="25" fill="#ffffff" stroke="#c6c6c6" stroke-width="1"/>
<rect x="26" y="224" width="900" height="220" fill="#ffffff" />
<rect x="26" y="243" width="874" height="1" fill="#d4d4d4" />
<rect x="26" y="263" width="874" height="1" fill="#d4d4d4" />
<rect x="26" y="283" width="874" height="1" fill="#d4d4d4" />
<rect x="26" y="303" width="874" height="1" fill="#d4d4d4" />
<rect x="26" y="323" width="874" height="1" fill="#d4d4d4" />
<rect x="26" y="343" width="874" height="1" fill="#d4d4d4" />
<rect x="26" y="363" width="874" height="1" fill="#d4d4d4" />
<rect x="26" y="383" width="874" height="1" fill="#d4d4d4" />
<rect x="26" y="403" width="874" height="1" fill="#d4d4d4" />
<rect x="26" y="423" width="874" height="1" fill="#d4d4d4" />
<rect x="26" y="443" width="874" height="1" fill="#d4d4d4" />
<rect x="96" y="224" width="1" height="220" fill="#d4d4d4" />
<rect x="167" y="224" width="1" height="220" fill="#d4d4d4" />
<rect x="223" y="224" width="1" height="220" fill="#d4d4d4" />
<rect x="278" y="224" width="1" height="220" fill="#d4d4d4" />
<rect x="342" y="224" width="1" height="220" fill="#d4d4d4" />
<rect x="406" y="224" width="1" height="220" fill="#d4d4d4" />
<rect x="470" y="224" width="1" height="220" fill="#d4d4d4" />
<rect x="534" y="224" width="1" height="220" fill="#d4d4d4" />
<rect x="598" y="224" width="1" height="220" fill="#d4d4d4" />
<rect x="662" y="224" width="1" height="220" fill="#d4d4d4" />
<rect x="726" y="224" width="1" height="220" fill="#d4d4d4" />
<rect x="790" y="224" width="1" height="220" fill="#d4d4d4" />
<rect x="854" y="224" width="1" height="220" fill="#d4d4d4" />
<rect x="918" y="224" width="1" height="220" fill="#d4d4d4" />
<rect x="0" y="204" width="900" height="19" fill="#e6e6e6" />
<rect x="26" y="204" width="70" height="19" fill="#d2d2d2" />
<rect x="96" y="204" width="1" height="19" fill="#bababa" />
<rect x="167" y="204" width="1" height="19" fill="#bababa" />
<rect x="223" y="204" width="1" height="19" fill="#bababa" />
<rect x="278" y="204" width="1" height="19" fill="#bababa" />
<rect x="342" y="204" width="1" height="19" fill="#bababa" />
<rect x="406" y="204" width="1" height="19" fill="#bababa" />
<rect x="470" y="204" width="1" height="19" fill="#bababa" />
<rect x="534" y="204" width="1" height="19" fill="#bababa" />
<rect x="598" y="204" width="1" height="19" fill="#bababa" />
<rect x="662" y="204" width="1" height="19" fill="#bababa" />
<rect x="726" y="204" width="1" height="19" fill="#bababa" />
<rect x="790" y="204" width="1" height="19" fill="#bababa" />
<rect x="854" y="204" width="1" height="19" fill="#bababa" />
<rect x="918" y="204" width="1" height="19" fill="#bababa" />
<rect x="0" y="223" width="900" height="1" fill="#9f9f9f" />
<rect x="25" y="204" width="1" height="19" fill="#bababa" />
<path d="M22 208V220H10z" fill="#b4b4b4"/>
<text x="61.0" y="218" font-size="12.8" fill="#1e6b41" text-anchor="middle" >A</text>
<text x="132.0" y="218" font-size="12.8" fill="#262626" text-anchor="middle" >B</text>
<text x="195.5" y="218" font-size="12.8" fill="#262626" text-anchor="middle" >C</text>
<text x="251.0" y="218" font-size="12.8" fill="#262626" text-anchor="middle" >D</text>
<text x="310.5" y="218" font-size="12.8" fill="#262626" text-anchor="middle" >E</text>
<text x="374.5" y="218" font-size="12.8" fill="#262626" text-anchor="middle" >F</text>
<text x="438.5" y="218" font-size="12.8" fill="#262626" text-anchor="middle" >G</text>
<text x="502.5" y="218" font-size="12.8" fill="#262626" text-anchor="middle" >H</text>
<text x="566.5" y="218" font-size="12.8" fill="#262626" text-anchor="middle" >I</text>
<text x="630.5" y="218" font-size="12.8" fill="#262626" text-anchor="middle" >J</text>
<text x="694.5" y="218" font-size="12.8" fill="#262626" text-anchor="middle" >K</text>
<text x="758.5" y="218" font-size="12.8" fill="#262626" text-anchor="middle" >L</text>
<text x="822.5" y="218" font-size="12.8" fill="#262626" text-anchor="middle" >M</text>
<text x="886.5" y="218" font-size="12.8" fill="#262626" text-anchor="middle" >N</text>
<rect x="0" y="224" width="25" height="220" fill="#e6e6e6" />
<rect x="0" y="224" width="25" height="19" fill="#d2d2d2" />
<rect x="0" y="243" width="25" height="1" fill="#bababa" />
<text x="12.8" y="239" font-size="12.8" fill="#1e6b41" text-anchor="middle" >1</text>
<rect x="0" y="263" width="25" height="1" fill="#bababa" />
<text x="12.8" y="259" font-size="12.8" fill="#262626" text-anchor="middle" >2</text>
<rect x="0" y="283" width="25" height="1" fill="#bababa" />
<text x="12.8" y="279" font-size="12.8" fill="#262626" text-anchor="middle" >3</text>
<rect x="0" y="303" width="25" height="1" fill="#bababa" />
<text x="12.8" y="299" font-size="12.8" fill="#262626" text-anchor="middle" >4</text>
<rect x="0" y="323" width="25" height="1" fill="#bababa" />
<text x="12.8" y="319" font-size="12.8" fill="#262626" text-anchor="middle" >5</text>
<rect x="0" y="343" width="25" height="1" fill="#bababa" />
<text x="12.8" y="339" font-size="12.8" fill="#262626" text-anchor="middle" >7</text>
<rect x="0" y="363" width="25" height="1" fill="#bababa" />
<text x="12.8" y="359" font-size="12.8" fill="#262626" text-anchor="middle" >10</text>
<rect x="0" y="383" width="25" height="1" fill="#bababa" />
<text x="12.8" y="379" font-size="12.8" fill="#262626" text-anchor="middle" >14</text>
<rect x="0" y="403" width="25" height="1" fill="#bababa" />
<text x="12.8" y="399" font-size="12.8" fill="#262626" text-anchor="middle" >20</text>
<rect x="0" y="423" width="25" height="1" fill="#bababa" />
<text x="12.8" y="419" font-size="12.8" fill="#262626" text-anchor="middle" >21</text>
<rect x="0" y="443" width="25" height="1" fill="#bababa" />
<text x="12.8" y="439" font-size="12.8" fill="#262626" text-anchor="middle" >22</text>
<rect x="25" y="224" width="1" height="220" fill="#9f9f9f" />
<text x="28" y="239" font-size="13.2" fill="#000" font-weight="bold" textLength="63.5" lengthAdjust="spacingAndGlyphs" >Last Name</text>
<text x="99" y="239" font-size="13.2" fill="#000" font-weight="bold" textLength="30.5" lengthAdjust="spacingAndGlyphs" >Sales</text>
<text x="170" y="239" font-size="13.2" fill="#000" font-weight="bold" textLength="48.5" lengthAdjust="spacingAndGlyphs" >Country</text>
<text x="226" y="239" font-size="13.2" fill="#000" font-weight="bold" textLength="46.5" lengthAdjust="spacingAndGlyphs" >Quarter</text>
<text x="170" y="259" font-size="13.2" fill="#000" textLength="24.5" lengthAdjust="spacingAndGlyphs" >USA</text>
<text x="226" y="259" font-size="13.2" fill="#000" textLength="29.5" lengthAdjust="spacingAndGlyphs" >Qtr 4</text>
<text x="28" y="319" font-size="13.2" fill="#000" font-weight="bold" textLength="63.5" lengthAdjust="spacingAndGlyphs" >Last Name</text>
<text x="99" y="319" font-size="13.2" fill="#000" font-weight="bold" textLength="30.5" lengthAdjust="spacingAndGlyphs" >Sales</text>
<text x="170" y="319" font-size="13.2" fill="#000" font-weight="bold" textLength="48.5" lengthAdjust="spacingAndGlyphs" >Country</text>
<text x="226" y="319" font-size="13.2" fill="#000" font-weight="bold" textLength="46.5" lengthAdjust="spacingAndGlyphs" >Quarter</text>
<text x="28" y="339" font-size="13.2" fill="#000" textLength="50.5" lengthAdjust="spacingAndGlyphs" >Johnson</text>
<text x="102" y="339" font-size="13.2" fill="#000" textLength="63.5" lengthAdjust="spacingAndGlyphs" >$14,808.00</text>
<text x="170" y="339" font-size="13.2" fill="#000" textLength="24.5" lengthAdjust="spacingAndGlyphs" >USA</text>
<text x="226" y="339" font-size="13.2" fill="#000" textLength="29.5" lengthAdjust="spacingAndGlyphs" >Qtr 4</text>
<text x="28" y="359" font-size="13.2" fill="#000" textLength="39.5" lengthAdjust="spacingAndGlyphs" >Brown</text>
<text x="109" y="359" font-size="13.2" fill="#000" textLength="56.5" lengthAdjust="spacingAndGlyphs" >$4,865.00</text>
<text x="170" y="359" font-size="13.2" fill="#000" textLength="24.5" lengthAdjust="spacingAndGlyphs" >USA</text>
<text x="226" y="359" font-size="13.2" fill="#000" textLength="29.5" lengthAdjust="spacingAndGlyphs" >Qtr 4</text>
<text x="28" y="379" font-size="13.2" fill="#000" textLength="33.5" lengthAdjust="spacingAndGlyphs" >Jones</text>
<text x="109" y="379" font-size="13.2" fill="#000" textLength="56.5" lengthAdjust="spacingAndGlyphs" >$9,213.00</text>
<text x="170" y="379" font-size="13.2" fill="#000" textLength="24.5" lengthAdjust="spacingAndGlyphs" >USA</text>
<text x="226" y="379" font-size="13.2" fill="#000" textLength="29.5" lengthAdjust="spacingAndGlyphs" >Qtr 4</text>
<path d="M24 222H98V241M93 244H24V222" fill="none" stroke="#217346" stroke-width="0"/>
<rect x="24" y="222" width="74" height="2" fill="#217346" />
<rect x="24" y="222" width="2" height="23" fill="#217346" />
<rect x="96" y="222" width="2" height="18" fill="#217346" />
<rect x="24" y="243" width="69" height="2" fill="#217346" />
<rect x="93" y="240" width="6" height="6" fill="#ffffff" />
<rect x="94" y="241" width="5" height="5" fill="#217346" />
</g>
<rect x="345" y="371" width="45" height="69" fill="#c6c6c6" />
<rect x="352.5" y="377.5" width="29" height="24" fill="#fff" stroke="#6d6d6d"/>
<path d="M357.5 378v23M362.5 378v23M367.5 378v23M372.5 378v23M377.5 378v23M353 380.5h28M353 383.5h28M353 386.5h28M353 389.5h28M353 392.5h28M353 395.5h28M353 398.5h28" stroke="#8a8a8a" stroke-width="1" fill="none"/>
<text x="346.9" y="421.5" font-size="11.6" fill="#474747" textLength="40.6" lengthAdjust="spacingAndGlyphs" >Normal</text>
<rect x="407.5" y="377.5" width="27" height="24" fill="#fff" stroke="#6d6d6d"/>
<path d="M412.5 378v23M417.5 378v23M428.5 378v23M408 380.5h27M408 383.5h27M408 386.5h27M408 389.5h27M408 392.5h27M408 398.5h27" stroke="#b9cfe8" stroke-width="1" fill="none"/>
<path d="M423.5 378v23" stroke="#6d6d6d" stroke-width="1" fill="none"/>
<path d="M408 395.5h27" stroke="#6d6d6d" stroke-width="1" stroke-dasharray="2 1" fill="none"/>
<text x="391.4" y="421.5" font-size="11.6" fill="#474747" textLength="59.1" lengthAdjust="spacingAndGlyphs" >Page Break</text>
<text x="400.4" y="437.5" font-size="11.6" fill="#474747" textLength="41.8" lengthAdjust="spacingAndGlyphs" >Preview</text>
<path d="M463.5 376.5h13l7 7v20h-20z" fill="#fff" stroke="#6d6d6d" stroke-width="1.2"/>
<path d="M476.5 376.5v7h7" fill="none" stroke="#6d6d6d" stroke-width="1.2"/>
<rect x="466.5" y="385.5" width="14" height="15" fill="#fff" stroke="#9a9a9a"/>
<path d="M473.5 386v14M467 388.5h13M467 391.5h13M467 394.5h13M467 397.5h13" stroke="#9a9a9a" stroke-width="1" fill="none"/>
<text x="460.4" y="421.5" font-size="11.6" fill="#474747" textLength="27.1" lengthAdjust="spacingAndGlyphs" >Page</text>
<text x="456.09999999999997" y="437.5" font-size="11.6" fill="#474747" textLength="36.4" lengthAdjust="spacingAndGlyphs" >Layout</text>
<rect x="509.5" y="381.5" width="18" height="17" fill="#fff" stroke="#6d6d6d" stroke-width="1.2"/>
<rect x="512" y="383.2" width="13" height="2.6" fill="#b9cfe8" />
<path d="M509.5 377.5h18M509.5 376v3M527.5 376v3M505.5 381.5v17M504 381.5h3M504 398.5h3M528.5 377.5h3v25h-17v-2" stroke="#6d6d6d" stroke-width="1" fill="none"/>
<text x="496.59999999999997" y="421.5" font-size="11.6" fill="#474747" textLength="42.4" lengthAdjust="spacingAndGlyphs" >Custom</text>
<text x="502.4" y="437.5" font-size="11.6" fill="#474747" textLength="30.7" lengthAdjust="spacingAndGlyphs" >Views</text>
<text x="398.5" y="456" font-size="11" fill="#666666" textLength="89" lengthAdjust="spacingAndGlyphs" >Workbook Views</text>
<rect x="546" y="372" width="1" height="84" fill="#d6d6d6" />
<rect x="554.5" y="383.5" width="12" height="12" fill="#fff" stroke="#c6c6c6"/>
<path d="M557 389l2.8 3.8 4.6-6.3" stroke="#c6c6c6" stroke-width="1.5" fill="none"/>
<rect x="628.5" y="383.5" width="12" height="12" fill="#fff" stroke="#666666"/>
<path d="M631 389l2.8 3.8 4.6-6.3" stroke="#555" stroke-width="1.5" fill="none"/>
<rect x="554.5" y="414.5" width="12" height="12" fill="#fff" stroke="#666666"/>
<path d="M557 420l2.8 3.8 4.6-6.3" stroke="#555" stroke-width="1.5" fill="none"/>
<rect x="628.5" y="414.5" width="12" height="12" fill="#fff" stroke="#666666"/>
<path d="M631 420l2.8 3.8 4.6-6.3" stroke="#555" stroke-width="1.5" fill="none"/>
<text x="571.6999999999999" y="395" font-size="11.6" fill="#a6a6a6" textLength="27.5" lengthAdjust="spacingAndGlyphs" >Ruler</text>
<text x="646.0" y="395" font-size="11.6" fill="#474747" textLength="64.5" lengthAdjust="spacingAndGlyphs" >Formula Bar</text>
<text x="571.6999999999999" y="425.5" font-size="11.6" fill="#474747" textLength="46.3" lengthAdjust="spacingAndGlyphs" >Gridlines</text>
<text x="646.0" y="425.5" font-size="11.6" fill="#474747" textLength="50.2" lengthAdjust="spacingAndGlyphs" >Headings</text>
<text x="619.1" y="456" font-size="11" fill="#666666" textLength="29.1" lengthAdjust="spacingAndGlyphs" >Show</text>
<rect x="721" y="372" width="1" height="84" fill="#d6d6d6" />
<circle cx="743.3" cy="385.3" r="8.8" fill="#fff" stroke="#6d6d6d" stroke-width="2"/>
<path d="M749.6 391.6L758 400" stroke="#6d6d6d" stroke-width="3.2" stroke-linecap="round" fill="none"/>
<text x="730.8" y="420.8" font-size="11.6" fill="#474747" textLength="31.7" lengthAdjust="spacingAndGlyphs" >Zoom</text>
<path d="M776.5 375.5h12.5l6.5 6.5v19.5h-19z" fill="#fff" stroke="#6d6d6d"/>
<path d="M789 375.5v6.5h6.5" fill="none" stroke="#6d6d6d"/>
<path d="M789 375.5h12.5v20" fill="none" stroke="#7a7a7a" stroke-dasharray="1.5 1.5"/>
<path d="M790 388.6h9M796 385.3l3.3 3.3-3.3 3.3" stroke="#3f7ec3" stroke-width="1.8" fill="none"/>
<rect x="787.7" y="396.6" width="14.2" height="9.1" fill="#3f7ec3" />
<text x="788.7" y="404.5" font-size="8" fill="#fff" font-weight="bold" textLength="12" lengthAdjust="spacingAndGlyphs" >100</text>
<text x="773.8" y="420.8" font-size="11.6" fill="#474747" textLength="29.4" lengthAdjust="spacingAndGlyphs" >100%</text>
<rect x="822.5" y="377.5" width="28" height="23.5" fill="#fff" stroke="#8a8a8a"/>
<path d="M829.5 378v23M836.5 378v23M843.5 378v23M823 383.5h28M823 389.5h28M823 395.5h28" stroke="#9a9a9a" stroke-width="1" fill="none"/>
<circle cx="837.2" cy="391.1" r="7.2" fill="#fff" stroke="#f1f1f1" stroke-width="3"/>
<path d="M830 391.1a7.2 7.2 0 0 1 14.4 0z" fill="#c5d9ef"/>
<circle cx="837.2" cy="391.1" r="7.2" fill="none" stroke="#6d6d6d" stroke-width="2"/>
<path d="M842.5 396.5L850 404" stroke="#6d6d6d" stroke-width="3.2" stroke-linecap="round" fill="none"/>
<text x="812.4" y="420.8" font-size="11.6" fill="#474747" textLength="46.1" lengthAdjust="spacingAndGlyphs" >Zoom to</text>
<text x="811.6" y="437.2" font-size="11.6" fill="#474747" textLength="50.9" lengthAdjust="spacingAndGlyphs" >Selection</text>
<text x="779.7" y="456" font-size="11" fill="#666666" textLength="29.4" lengthAdjust="spacingAndGlyphs" >Zoom</text>
<rect x="486" y="696" width="340" height="38" fill="#ffffff" />
<text x="485" y="725.8" font-size="28.5" fill="#ed1c24" font-weight="bold" textLength="322" lengthAdjust="spacingAndGlyphs" >After Advanced Filtering</text>
</svg></body></html>
